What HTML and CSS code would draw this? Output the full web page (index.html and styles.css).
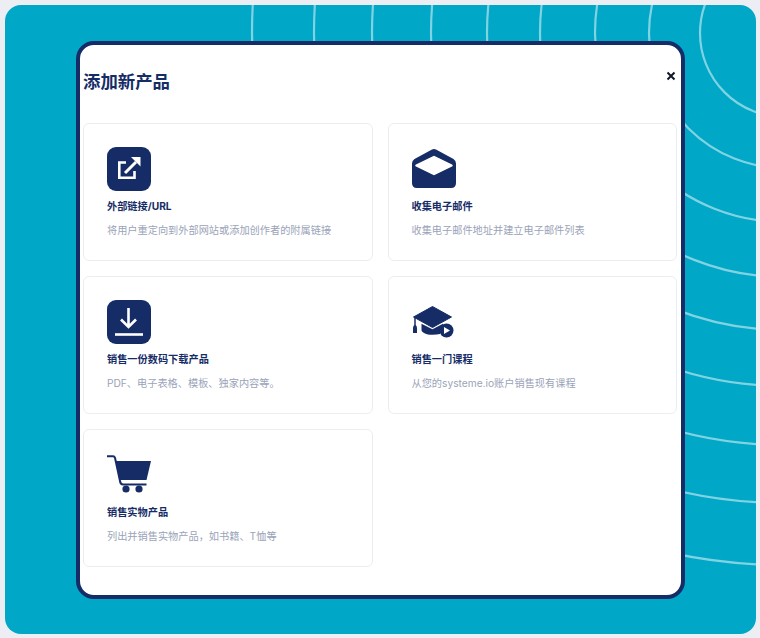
FILE: index.html
```html
<!DOCTYPE html>
<html lang="zh-CN">
<head>
    <meta charset="UTF-8">
    <title>添加新产品</title>
    <link rel="stylesheet" href="styles.css">
</head>
<body>
    <div class="panel">
        <svg class="arcs" viewBox="0 0 751 629" width="751" height="629" fill="none" stroke="#fff" stroke-opacity="0.5" stroke-width="2.2">
            <circle cx="779" cy="28" r="84"/>
            <circle cx="779" cy="28" r="135"/>
            <circle cx="779" cy="28" r="189"/>
            <circle cx="779" cy="28" r="244"/>
            <circle cx="779" cy="28" r="297"/>
            <circle cx="779" cy="28" r="353"/>
            <circle cx="779" cy="28" r="412"/>
            <circle cx="779" cy="28" r="470"/>
            <circle cx="779" cy="28" r="532"/>
        </svg>

        <div class="modal">
            <div class="modal-header">
                <h1>添加新产品</h1>
                <button class="close-button" aria-label="关闭">
                    <svg viewBox="0 0 10 10" width="10" height="10" fill="none" stroke="#111827" stroke-width="2"><path d="M1.500 1.500l7 7M8.500 1.500l-7 7"/></svg>
                </button>
            </div>

            <div class="card-grid">
                <div class="card">
                    <svg class="card-icon" viewBox="0 0 44 44">
                        <rect width="44" height="44" rx="9" fill="#152c66"/>
                        <path d="M19 15.500H12.300V30.700H27.500V24" fill="none" stroke="#fff" stroke-width="2.600"/>
                        <path d="M18 26L29 15" fill="none" stroke="#fff" stroke-width="3"/>
                        <path d="M24 10h9.500v9.500z" fill="#fff"/>
                    </svg>
                    <h2>外部链接/URL</h2>
                    <p>将用户重定向到外部网站或添加创作者的附属链接</p>
                </div>
                <div class="card">
                    <svg class="card-icon" viewBox="0 0 44 44">
                        <path d="M20 2.500q2-1.200 4 0L41.500 12q2.500 1.500 2.500 4.500V36q0 5-5 5H5q-5 0-5-5V16.500Q0 13.500 2.500 12z" fill="#152c66"/>
                        <path d="M22 10L39.500 18.500 22 27 4.500 18.500z" fill="#fff" stroke="#fff" stroke-linejoin="round" stroke-width="2.500"/>
                    </svg>
                    <h2>收集电子邮件</h2>
                    <p>收集电子邮件地址并建立电子邮件列表</p>
                </div>
                <div class="card">
                    <svg class="card-icon" viewBox="0 0 44 44">
                        <rect width="44" height="44" rx="9" fill="#152c66"/>
                        <path d="M21.500 8v19M14 19.500L21.500 27l7.500-7.500" fill="none" stroke="#fff" stroke-width="2.600"/>
                        <path d="M8 34.500h28" stroke="#fff" stroke-width="2.600"/>
                    </svg>
                    <h2>销售一份数码下载产品</h2>
                    <p>PDF、电子表格、模板、独家内容等。</p>
                </div>
                <div class="card">
                    <svg class="card-icon" viewBox="0 0 44 44">
                        <path d="M20.500 6.500L39.500 17 20.500 27.500 1.500 17z" fill="#152c66" stroke="#152c66" stroke-linejoin="round"/>
                        <path d="M9.500 23.800l11 5.500 10.500-5.500v3.700a9 9 0 0 0-3 6.500q-3 .8-7.500 .8C14 34.800 9.500 32.500 9.500 30z" fill="#152c66"/>
                        <circle cx="34.500" cy="30.500" r="7" fill="#152c66"/>
                        <path d="M32 27l6 3.500-6 3.500z" fill="#fff"/>
                        <path d="M3 18v8" stroke="#152c66" stroke-width="1.500"/>
                        <path d="M3 25q2 0 2 4v4H1v-4q0-4 2-4z" fill="#152c66"/>
                    </svg>
                    <h2>销售一门课程</h2>
                    <p>从您的systeme.io账户销售现有课程</p>
                </div>
                <div class="card">
                    <svg class="card-icon" viewBox="0 0 44 44">
                        <path d="M0 3.200h6q1.500 0 2 1.500L13 28q.5 3.500 3 3.500H39.500" fill="none" stroke="#152c66" stroke-width="2"/>
                        <path d="M8.500 8H44l-4.500 19H13z" fill="#152c66"/>
                        <circle cx="19" cy="36" r="3.600" fill="#152c66"/>
                        <circle cx="32" cy="36" r="3.600" fill="#152c66"/>
                    </svg>
                    <h2>销售实物产品</h2>
                    <p>列出并销售实物产品，如书籍、T恤等</p>
                </div>
            </div>
        </div>
    </div>
</body>
</html>
```

FILE: styles.css
```css
* {
    margin: 0;
    padding: 0;
    box-sizing: border-box;
}
body {
    width: 760px;
    height: 638px;
    overflow: hidden;
    background: #eceef3;
    font-family: 'Inter', 'Noto Sans CJK SC', sans-serif;
    padding: 5px 4px 4px 5px;
}
.panel {
    position: relative;
    height: 100%;
    overflow: hidden;
    background: #00a7c7;
    border-radius: 16px;
    padding: 36px 71px 35px 71px;
}
.arcs {
    position: absolute;
    top: 0;
    left: 0;
}
.modal {
    position: relative;
    height: 100%;
    background: #fff;
    border: 4px solid #152c66;
    border-radius: 18px;
    padding: 0 4px 0 3px;
}
.modal-header {
    display: flex;
    justify-content: space-between;
    align-items: flex-start;
    height: 78px;
}
h1 {
    font-size: 17.400px;
    line-height: 26px;
    font-weight: 700;
    color: #152c66;
    margin-top: 24px;
}
.close-button {
    display: flex;
    background: none;
    border: none;
    cursor: pointer;
    margin-top: 26px;
    margin-right: 1px;
}
.card-grid {
    display: grid;
    grid-template-columns: 289.500px 289.500px;
    grid-auto-rows: 138px;
    gap: 15px;
}
.card {
    border: 1px solid #ebedf0;
    border-radius: 6px;
    padding: 23px;
    background: #fff;
}
.card-icon {
    display: block;
    width: 44px;
    height: 44px;
}
.card h2 {
    font-size: 10.200px;
    line-height: 14px;
    font-weight: 700;
    color: #152c66;
    margin-top: 8px;
}
.card p {
    font-size: 10.200px;
    line-height: 16px;
    color: #9aa3b8;
    margin-top: 9px;
    white-space: nowrap;
}
```
